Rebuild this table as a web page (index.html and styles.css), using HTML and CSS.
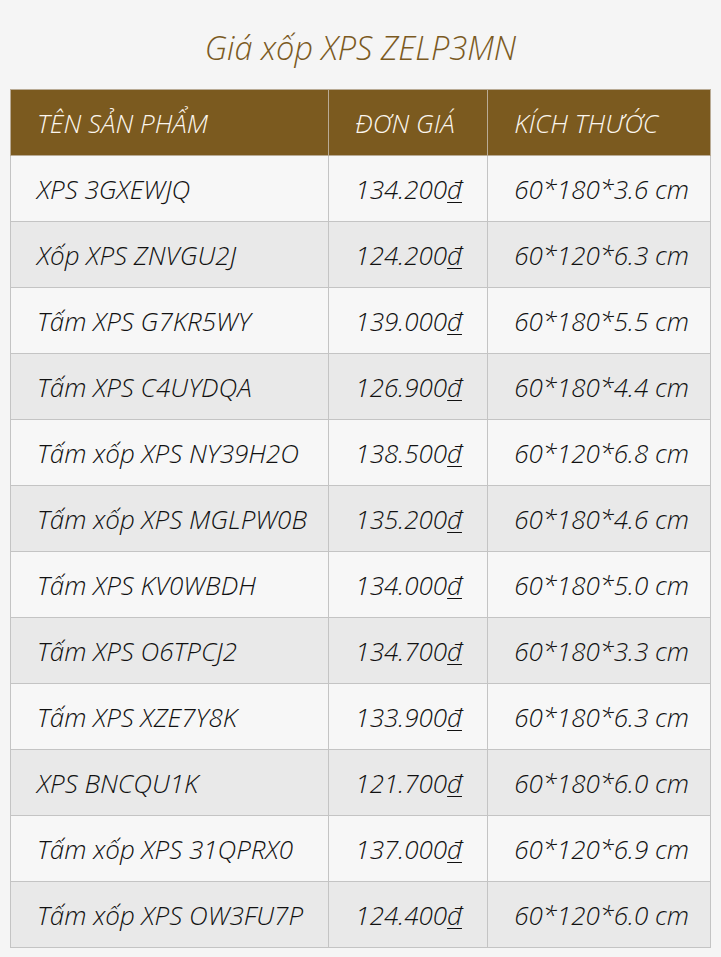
FILE: index.html
```html
<!DOCTYPE html>
<html lang="vi">
<head>
<meta charset="utf-8">
<link rel="stylesheet" href="styles.css">
</head>
<body>
<h1 class="title">Giá xốp XPS ZELP3MN</h1>
<table class="price-table">
  <thead>
    <tr><th class="c1">TÊN SẢN PHẨM</th><th class="c2">ĐƠN GIÁ</th><th class="c3">KÍCH THƯỚC</th></tr>
  </thead>
  <tbody>
    <tr><td>XPS 3GXEWJQ</td><td>134.200<u>đ</u></td><td>60*180*3.6 cm</td></tr>
    <tr><td>Xốp XPS ZNVGU2J</td><td>124.200<u>đ</u></td><td>60*120*6.3 cm</td></tr>
    <tr><td>Tấm XPS G7KR5WY</td><td>139.000<u>đ</u></td><td>60*180*5.5 cm</td></tr>
    <tr><td>Tấm XPS C4UYDQA</td><td>126.900<u>đ</u></td><td>60*180*4.4 cm</td></tr>
    <tr><td>Tấm xốp XPS NY39H2O</td><td>138.500<u>đ</u></td><td>60*120*6.8 cm</td></tr>
    <tr><td>Tấm xốp XPS MGLPW0B</td><td>135.200<u>đ</u></td><td>60*180*4.6 cm</td></tr>
    <tr><td>Tấm XPS KV0WBDH</td><td>134.000<u>đ</u></td><td>60*180*5.0 cm</td></tr>
    <tr><td>Tấm XPS O6TPCJ2</td><td>134.700<u>đ</u></td><td>60*180*3.3 cm</td></tr>
    <tr><td>Tấm XPS XZE7Y8K</td><td>133.900<u>đ</u></td><td>60*180*6.3 cm</td></tr>
    <tr><td>XPS BNCQU1K</td><td>121.700<u>đ</u></td><td>60*180*6.0 cm</td></tr>
    <tr><td>Tấm xốp XPS 31QPRX0</td><td>137.000<u>đ</u></td><td>60*120*6.9 cm</td></tr>
    <tr><td>Tấm xốp XPS OW3FU7P</td><td>124.400<u>đ</u></td><td>60*120*6.0 cm</td></tr>
  </tbody>
</table>
</body>
</html>
```
FILE: styles.css
```css
html, body {
  margin: 0;
  padding: 0;
  background: #f5f5f5;
}
body {
  padding: 0 10px;
  font-family: "Open Sans", "Liberation Sans", sans-serif;
  font-style: italic;
  font-weight: 300;
}
.title {
  margin: 0;
  height: 89px;
  line-height: 96px;
  text-align: center;
  font-size: 32.5px;
  font-weight: 300;
  color: #7b5a1f;
}
.price-table {
  width: 701px;
  border-collapse: collapse;
  font-size: 26px;
  color: #111111;
}
.price-table th,
.price-table td {
  height: 66px;
  padding: 0 0 0 26px;
  text-align: left;
  border: 1px solid #c4c4c4;
  box-sizing: border-box;
  vertical-align: middle;
}
.price-table th {
  background: #7b5a1f;
  color: #fbf6ee;
  font-weight: 300;
  border-color: #b9ab95;
}
.c1 { width: 319px; }
.c2 { width: 159px; }
.c3 { width: 223px; }
.price-table tbody tr:nth-child(odd) td { background: #f7f7f7; }
.price-table tbody tr:nth-child(even) td { background: #e9e9e9; }
.price-table u {
  text-decoration-thickness: 1px;
  text-underline-offset: 3px;
}
```
